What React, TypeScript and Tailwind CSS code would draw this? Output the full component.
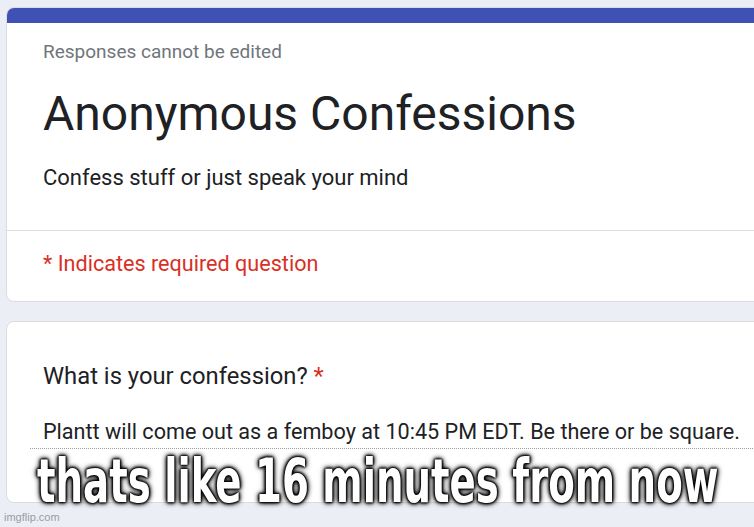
import React from "react";

export default function App() {
  return (
    <div className="relative w-[754px] h-[527px] overflow-hidden bg-[#eceef6] pt-[7px] pl-[6px] font-['Roboto',sans-serif]">
      <div className="w-[780px] rounded-[8px] border border-[#dadce0] bg-white overflow-hidden">
        <div className="h-[15px] bg-[#4051b5]" />
        <div className="pl-[36px] pt-[17px] pb-[38px]">
          <div className="text-[19px] leading-[24px] text-[#70757a]">Responses cannot be edited</div>
          <div className="mt-[22px] text-[48px] leading-[56px] text-[#202124]">Anonymous Confessions</div>
          <div className="mt-[22px] text-[22px] leading-[28px] text-[#202124]">Confess stuff or just speak your mind</div>
        </div>
        <div className="h-px bg-[#dadce0]" />
        <div className="pl-[36px] pt-[19px] pb-[23px]">
          <div className="text-[21.6px] leading-[28px] text-[#d93025]">* Indicates required question</div>
        </div>
      </div>
      <div className="mt-[19px] w-[780px] h-[182px] rounded-[8px] border border-[#dadce0] bg-white">
        <div className="pl-[36px] pt-[39px]">
          <div className="text-[23.8px] leading-[30px] text-[#202124]">
            What is your confession? <span className="text-[#d93025]">*</span>
          </div>
          <div className="mt-[28px] text-[21.6px] leading-[26px] text-[#202124] whitespace-nowrap">
            Plantt will come out as a femboy at 10:45 PM EDT. Be there or be square.
          </div>
          <div className="mt-[3px] -ml-[13px] border-b border-dotted border-[#9aa0a6]" />
        </div>
      </div>
      <div className="absolute left-[37px] top-[456px] origin-left scale-x-[0.717] whitespace-nowrap text-white text-[60px] leading-[50px] font-bold font-['DejaVu_Sans_Condensed',sans-serif] [text-shadow:0_0_2px_#000,0_0_2px_#000,0_0_3px_#000,0_0_4px_#000,0_0_6px_#000,0_0_8px_#000]">
        thats like 16 minutes from now
      </div>
      <div className="absolute left-[4px] bottom-[3px] text-[11px] leading-[14px] text-[#9a9ca3] font-['Liberation_Sans',sans-serif]">
        imgflip.com
      </div>
    </div>
  );
}
